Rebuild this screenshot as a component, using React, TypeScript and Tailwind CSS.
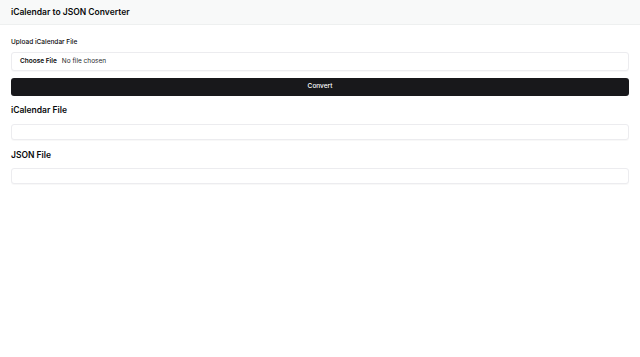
export default function App() {
  return (
    <div className="min-h-screen bg-white font-['Inter','Liberation_Sans',sans-serif] text-[#09090b]">
      <header className="flex h-[25px] items-center border-b border-[#eef0f0] bg-[#f8f9f9] px-[11px]">
        <h1 className="text-[8.5px] font-semibold leading-none">iCalendar to JSON Converter</h1>
      </header>
      <main className="px-[11px] pt-[13px]">
        <label className="block text-[6.5px] font-medium leading-[9px]">Upload iCalendar File</label>
        <div className="mt-[5px] flex h-[19px] items-center rounded-[3px] border border-[#ececef] bg-white px-[8px] text-[6.5px] shadow-[0_1px_1px_rgba(0,0,0,0.03)]">
          <span className="font-semibold">Choose File</span>
          <span className="ml-[5px] text-[#27272a]">No file chosen</span>
        </div>
        <button className="mt-[7px] flex h-[18px] w-full items-center justify-center rounded-[3px] bg-[#18181b] text-[6.5px] font-medium text-white">
          Convert
        </button>
        <h2 className="mt-[9px] text-[8.5px] font-semibold leading-[11px]">iCalendar File</h2>
        <div className="mt-[8px] h-[16px] rounded-[3px] border border-[#ececef] bg-white shadow-[0_1px_1px_rgba(0,0,0,0.03)]" />
        <h2 className="mt-[10px] text-[8.5px] font-semibold leading-[11px]">JSON File</h2>
        <div className="mt-[7px] h-[16px] rounded-[3px] border border-[#ececef] bg-white shadow-[0_1px_1px_rgba(0,0,0,0.03)]" />
      </main>
    </div>
  );
}
